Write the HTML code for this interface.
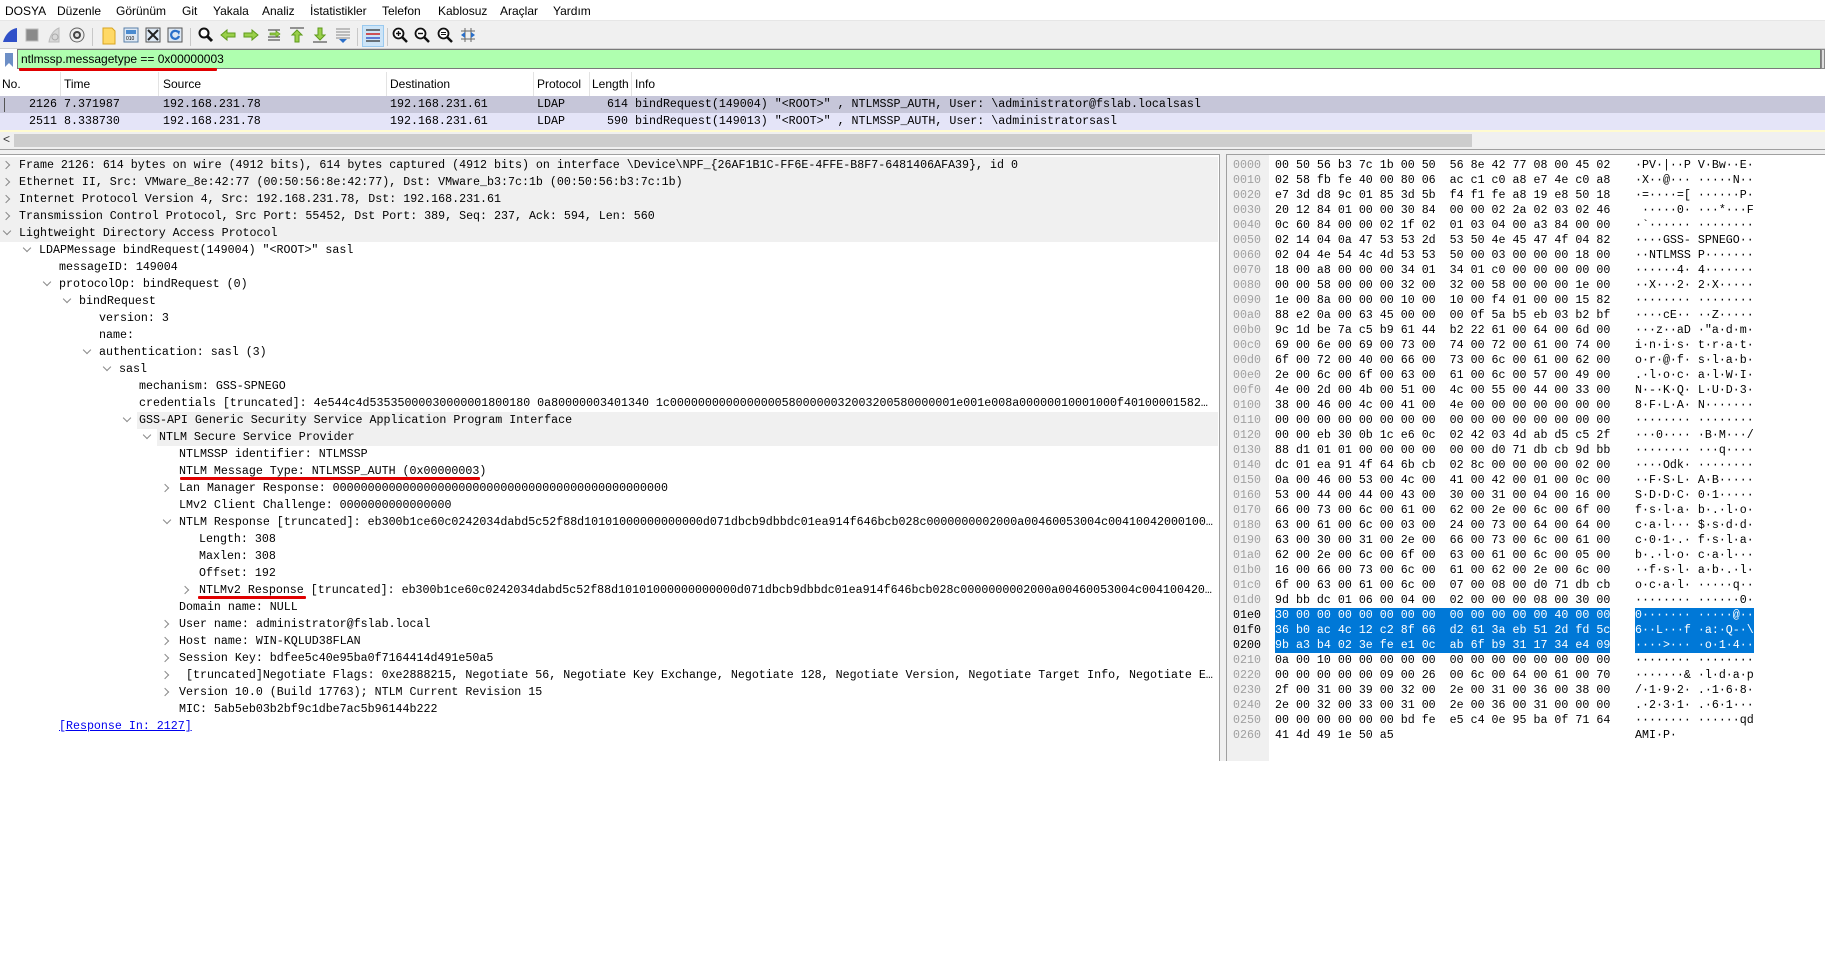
<!DOCTYPE html>
<html><head><meta charset="utf-8">
<style>
*{margin:0;padding:0;box-sizing:border-box}
body{width:1825px;height:761px;overflow:hidden;background:#fff;position:relative;font-family:"Liberation Sans",sans-serif;color:#000}
.ab{position:absolute}
.menu span{position:absolute;top:4px;font-size:12px}
.tb{position:absolute;top:20px;left:0;width:1825px;height:28px;background:#f0f0f0;border-top:1px solid #e6e6e6}
.ic{position:absolute;top:6px}
.sep{position:absolute;top:7px;width:1px;height:18px;background:#c8c8c8}
.mono{font-family:"Liberation Mono",monospace;font-size:11.65px;white-space:pre}
.ph{position:absolute;top:72px;height:24px;font-size:12px;line-height:24px;color:#000}
.phs{position:absolute;top:72px;width:1px;height:24px;background:#e3e3e3}
.row{position:absolute;left:0;width:1825px;height:17px;line-height:17px}
.row span{position:absolute;top:0}
.dl{position:absolute;left:0;width:1218px;height:17px;line-height:17px}
.dl .t{position:absolute;top:0;overflow:hidden;text-overflow:ellipsis;white-space:pre}
.cc,.ce{position:absolute;top:5px;width:6px;height:6px;border-right:1.4px solid #8a8a8a;border-bottom:1.4px solid #8a8a8a}
.cc{transform:rotate(-45deg)}
.ce{transform:rotate(45deg);top:3px}
.g{background:#f0f0f0}
.hr{position:absolute;left:1226px;width:599px;height:15px;line-height:15px}
.hr .o{position:absolute;top:0;left:7px;color:#a0a0a0}
.hr .h{position:absolute;top:0;left:49px}
.hr .a{position:absolute;top:0;left:409px}
.sel .h,.sel .a{background:#0078d7;color:#fff}
.sel .o{color:#000}
.ul{position:absolute;height:3px;background:#e00000;border-radius:1px}
</style></head><body>

<div class="menu">
<span style="left:5px">DOSYA</span><span style="left:57px">Düzenle</span><span style="left:116px">Görünüm</span><span style="left:182px">Git</span><span style="left:213px">Yakala</span><span style="left:262px">Analiz</span><span style="left:310px">İstatistikler</span><span style="left:382px">Telefon</span><span style="left:438px">Kablosuz</span><span style="left:500px">Araçlar</span><span style="left:553px">Yardım</span>
</div>

<div class="tb">
<svg class="ic" style="left:2px" width="16" height="16"><path d="M15 15H1C3 8 8 2 15 1Z" fill="#3050c8"/></svg>
<svg class="ic" style="left:24px" width="16" height="16"><rect x="2" y="2" width="12" height="12" fill="#8a8a8a" stroke="#bbb"/></svg>
<svg class="ic" style="left:46px" width="16" height="16"><path d="M13 15H3C4 8 8 3 13 1Z" fill="#d8d8d8" stroke="#bbb"/><circle cx="9" cy="10" r="3" fill="none" stroke="#aaa"/></svg>
<svg class="ic" style="left:69px" width="16" height="16"><circle cx="8" cy="8" r="7" fill="#eee" stroke="#666"/><circle cx="8" cy="8" r="4" fill="#444"/><circle cx="8" cy="8" r="2" fill="#ddd"/></svg>
<div class="sep" style="left:92px"></div>
<svg class="ic" style="left:101px" width="16" height="18"><path d="M2 1h9l3 3v13H2z" fill="#ffd966" stroke="#d9a520"/></svg>
<svg class="ic" style="left:123px" width="16" height="16"><rect x="1" y="1" width="14" height="14" fill="#dde8f4" stroke="#5a7fa8"/><rect x="3" y="3" width="10" height="4" fill="#4a8bd0"/><text x="3" y="13" font-size="5" font-family="Liberation Sans">010</text></svg>
<svg class="ic" style="left:145px" width="16" height="16"><rect x="1" y="1" width="14" height="14" fill="#dde8f4" stroke="#555"/><path d="M3 3L13 13M13 3L3 13" stroke="#222" stroke-width="2"/></svg>
<svg class="ic" style="left:167px" width="16" height="16"><rect x="1" y="1" width="14" height="14" fill="#dde8f4" stroke="#555"/><path d="M11 5A4 4 0 1 0 12 9" fill="none" stroke="#2a6fc9" stroke-width="2.2"/><path d="M9 3l4 1-1 4z" fill="#2a6fc9"/></svg>
<div class="sep" style="left:190px"></div>
<svg class="ic" style="left:198px" width="16" height="16"><circle cx="6" cy="6" r="4.5" fill="#fff" stroke="#111" stroke-width="2"/><path d="M9 9l5 5" stroke="#111" stroke-width="3"/></svg>
<svg class="ic" style="left:220px" width="16" height="16"><path d="M1 8l6-5v3h8v4H7v3z" fill="#9ad04a" stroke="#5e9a1c"/></svg>
<svg class="ic" style="left:243px" width="16" height="16"><path d="M15 8L9 3v3H1v4h8v3z" fill="#9ad04a" stroke="#5e9a1c"/></svg>
<svg class="ic" style="left:266px" width="16" height="16"><path d="M2 3h12M2 13h12M2 10h12" stroke="#333"/><path d="M4 6h6V4l4 3-4 3V8H4z" fill="#9ad04a" stroke="#5e9a1c" stroke-width=".7"/></svg>
<svg class="ic" style="left:289px" width="16" height="16"><path d="M1 1h14" stroke="#333"/><path d="M8 3l5 5h-3v7H6V8H3z" fill="#9ad04a" stroke="#5e9a1c"/></svg>
<svg class="ic" style="left:312px" width="16" height="16"><path d="M1 15h14" stroke="#333"/><path d="M8 13l5-5h-3V1H6v7H3z" fill="#9ad04a" stroke="#5e9a1c"/></svg>
<svg class="ic" style="left:335px" width="16" height="16"><path d="M1 2h14M1 5h14M1 8h14M1 11h14" stroke="#888"/><path d="M4 12h8l-4 4z" fill="#2a6fc9"/></svg>
<div class="sep" style="left:357px"></div>
<div class="ab" style="left:362px;top:4px;width:22px;height:22px;background:#cce4f7;border:1px solid #99c9ef"></div>
<svg class="ic" style="left:365px" width="16" height="16"><path d="M1 3h14" stroke="#333" stroke-width="1.3"/><path d="M1 7h14" stroke="#c00" stroke-width="1.3"/><path d="M1 11h14" stroke="#2040c0" stroke-width="1.3"/><path d="M1 14h14" stroke="#333" stroke-width="1.3"/></svg>
<div class="sep" style="left:387px"></div>
<svg class="ic" style="left:392px" width="16" height="16"><circle cx="6.5" cy="6.5" r="5" fill="#fff" stroke="#111" stroke-width="1.8"/><path d="M10 10l5 5" stroke="#111" stroke-width="2.5"/><path d="M4 6.5h5M6.5 4v5" stroke="#111" stroke-width="1.4"/></svg>
<svg class="ic" style="left:414px" width="16" height="16"><circle cx="6.5" cy="6.5" r="5" fill="#fff" stroke="#111" stroke-width="1.8"/><path d="M10 10l5 5" stroke="#111" stroke-width="2.5"/><path d="M4 6.5h5" stroke="#111" stroke-width="1.4"/></svg>
<svg class="ic" style="left:437px" width="16" height="16"><circle cx="6.5" cy="6.5" r="5" fill="#fff" stroke="#111" stroke-width="1.8"/><path d="M10 10l5 5" stroke="#111" stroke-width="2.5"/><path d="M4 5.5h5M4 7.5h5" stroke="#111" stroke-width="1"/></svg>
<svg class="ic" style="left:460px" width="16" height="16"><path d="M5 1v14M11 1v14M1 4h14M1 12h14" stroke="#666"/><path d="M1 8l4-3v6zM15 8l-4-3v6z" fill="#2a6fc9"/></svg>
</div>

<!-- filter bar -->
<div class="ab" style="left:0;top:48px;width:1825px;height:1px;background:#d0d0d0"></div>
<div class="ab" style="left:0;top:49px;width:1825px;height:21px;background:#fff"></div>
<svg class="ab" style="left:4px;top:52px" width="10" height="16"><path d="M1 1h8v14L5 11 1 15z" fill="#6d8fc6"/></svg>
<div class="ab" style="left:17px;top:49px;width:1804px;height:20px;background:#afffaf;border:1px solid #7a7a7a"></div>
<div class="ab" style="left:21px;top:51px;font-size:12px;line-height:16px">ntlmssp.messagetype == 0x00000003</div>
<div class="ul" style="left:19px;top:68px;width:198px"></div>
<div class="ab" style="left:1821px;top:49px;width:4px;height:20px;background:#ddd;border:1px solid #888"></div>

<!-- packet list -->
<div class="ph" style="left:2px">No.</div>
<div class="ph" style="left:64px">Time</div>
<div class="ph" style="left:163px">Source</div>
<div class="ph" style="left:390px">Destination</div>
<div class="ph" style="left:537px">Protocol</div>
<div class="ph" style="left:592px;width:38px;overflow:hidden">Length</div>
<div class="ph" style="left:635px">Info</div>
<div class="phs" style="left:60px"></div><div class="phs" style="left:158px"></div><div class="phs" style="left:386px"></div><div class="phs" style="left:533px"></div><div class="phs" style="left:589px"></div><div class="phs" style="left:631px"></div>

<div class="row mono" style="top:96px;background:#c6c6d9"><span style="left:4px;top:2px;width:1px;height:14px;background:#555"></span><span style="left:29px">2126</span><span style="left:64px">7.371987</span><span style="left:163px">192.168.231.78</span><span style="left:390px">192.168.231.61</span><span style="left:537px">LDAP</span><span style="left:607px">614</span><span style="left:635px">bindRequest(149004) "&lt;ROOT&gt;" , NTLMSSP_AUTH, User: \administrator@fslab.localsasl</span></div>
<div class="row mono" style="top:113px;background:#e4e4f8"><span style="left:29px">2511</span><span style="left:64px">8.338730</span><span style="left:163px">192.168.231.78</span><span style="left:390px">192.168.231.61</span><span style="left:537px">LDAP</span><span style="left:607px">590</span><span style="left:635px">bindRequest(149013) "&lt;ROOT&gt;" , NTLMSSP_AUTH, User: \administratorsasl</span></div>
<div class="ab" style="left:0;top:130px;width:1825px;height:2px;background:#fffbd0"></div>
<div class="ab" style="left:0;top:132px;width:1825px;height:17px;background:#f0f0f0"></div>
<div class="ab" style="left:14px;top:134px;width:1458px;height:13px;background:#cdcdcd"></div>
<div class="ab" style="left:3px;top:132px;font-size:12px;color:#333">&lt;</div>
<div class="ab" style="left:0;top:149px;width:1825px;height:1px;background:#a0a0a0"></div>
<div class="ab" style="left:0;top:150px;width:1825px;height:4px;background:#f0f0f0"></div>
<div class="ab" style="left:0;top:154px;width:1220px;height:607px;border:1px solid #a0a0a0;border-left:none;border-bottom:none"></div>
<div class="ab" style="left:1226px;top:154px;width:599px;height:607px;border:1px solid #a0a0a0;border-right:none;border-bottom:none"></div>
<div class="ab" style="left:1220px;top:154px;width:6px;height:607px;background:#f0f0f0"></div>
<div class="ab" style="left:1227px;top:155px;width:42px;height:606px;background:#f0f0f0"></div>

<!-- details -->
<div class="mono">
<div class="dl g" style="top:157px"><i class="cc" style="left:3px"></i><span class="t" style="left:19px;width:1195px">Frame 2126: 614 bytes on wire (4912 bits), 614 bytes captured (4912 bits) on interface \Device\NPF_{26AF1B1C-FF6E-4FFE-B8F7-6481406AFA39}, id 0</span></div>
<div class="dl g" style="top:174px"><i class="cc" style="left:3px"></i><span class="t" style="left:19px;width:1195px">Ethernet II, Src: VMware_8e:42:77 (00:50:56:8e:42:77), Dst: VMware_b3:7c:1b (00:50:56:b3:7c:1b)</span></div>
<div class="dl g" style="top:191px"><i class="cc" style="left:3px"></i><span class="t" style="left:19px;width:1195px">Internet Protocol Version 4, Src: 192.168.231.78, Dst: 192.168.231.61</span></div>
<div class="dl g" style="top:208px"><i class="cc" style="left:3px"></i><span class="t" style="left:19px;width:1195px">Transmission Control Protocol, Src Port: 55452, Dst Port: 389, Seq: 237, Ack: 594, Len: 560</span></div>
<div class="dl g" style="top:225px"><i class="ce" style="left:4px"></i><span class="t" style="left:19px;width:1195px">Lightweight Directory Access Protocol</span></div>
<div class="dl" style="top:242px"><i class="ce" style="left:24px"></i><span class="t" style="left:39px">LDAPMessage bindRequest(149004) "&lt;ROOT&gt;" sasl</span></div>
<div class="dl" style="top:259px"><span class="t" style="left:59px">messageID: 149004</span></div>
<div class="dl" style="top:276px"><i class="ce" style="left:44px"></i><span class="t" style="left:59px">protocolOp: bindRequest (0)</span></div>
<div class="dl" style="top:293px"><i class="ce" style="left:64px"></i><span class="t" style="left:79px">bindRequest</span></div>
<div class="dl" style="top:310px"><span class="t" style="left:99px">version: 3</span></div>
<div class="dl" style="top:327px"><span class="t" style="left:99px">name:</span></div>
<div class="dl" style="top:344px"><i class="ce" style="left:84px"></i><span class="t" style="left:99px">authentication: sasl (3)</span></div>
<div class="dl" style="top:361px"><i class="ce" style="left:104px"></i><span class="t" style="left:119px">sasl</span></div>
<div class="dl" style="top:378px"><span class="t" style="left:139px">mechanism: GSS-SPNEGO</span></div>
<div class="dl" style="top:395px"><span class="t" style="left:139px;width:1075px">credentials [truncated]: 4e544c4d53535000030000001800180 0a80000003401340 1c00000000000000005800000032003200580000001e001e008a00000010001000f4010000158288e2</span></div>
<div class="dl" style="top:412px"><i class="ce" style="left:124px"></i><span class="t g" style="left:137px;width:1081px;padding-left:2px">GSS-API Generic Security Service Application Program Interface</span></div>
<div class="dl" style="top:429px"><i class="ce" style="left:144px"></i><span class="t g" style="left:157px;width:1061px;padding-left:2px">NTLM Secure Service Provider</span></div>
<div class="dl" style="top:446px"><span class="t" style="left:179px">NTLMSSP identifier: NTLMSSP</span></div>
<div class="dl" style="top:463px"><span class="t" style="left:179px">NTLM Message Type: NTLMSSP_AUTH (0x00000003)</span></div>
<div class="dl" style="top:480px"><i class="cc" style="left:162px"></i><span class="t" style="left:179px">Lan Manager Response: 000000000000000000000000000000000000000000000000</span></div>
<div class="dl" style="top:497px"><span class="t" style="left:179px">LMv2 Client Challenge: 0000000000000000</span></div>
<div class="dl" style="top:514px"><i class="ce" style="left:164px"></i><span class="t" style="left:179px;width:1035px">NTLM Response [truncated]: eb300b1ce60c0242034dabd5c52f88d10101000000000000d071dbcb9dbbdc01ea914f646bcb028c0000000002000a00460053004c0041004200010000</span></div>
<div class="dl" style="top:531px"><span class="t" style="left:199px">Length: 308</span></div>
<div class="dl" style="top:548px"><span class="t" style="left:199px">Maxlen: 308</span></div>
<div class="dl" style="top:565px"><span class="t" style="left:199px">Offset: 192</span></div>
<div class="dl" style="top:582px"><i class="cc" style="left:182px"></i><span class="t" style="left:199px;width:1015px">NTLMv2 Response [truncated]: eb300b1ce60c0242034dabd5c52f88d10101000000000000d071dbcb9dbbdc01ea914f646bcb028c0000000002000a00460053004c0041004200010000</span></div>
<div class="dl" style="top:599px"><span class="t" style="left:179px">Domain name: NULL</span></div>
<div class="dl" style="top:616px"><i class="cc" style="left:162px"></i><span class="t" style="left:179px">User name: administrator@fslab.local</span></div>
<div class="dl" style="top:633px"><i class="cc" style="left:162px"></i><span class="t" style="left:179px">Host name: WIN-KQLUD38FLAN</span></div>
<div class="dl" style="top:650px"><i class="cc" style="left:162px"></i><span class="t" style="left:179px">Session Key: bdfee5c40e95ba0f7164414d491e50a5</span></div>
<div class="dl" style="top:667px"><i class="cc" style="left:162px"></i><span class="t" style="left:179px;width:1035px"> [truncated]Negotiate Flags: 0xe2888215, Negotiate 56, Negotiate Key Exchange, Negotiate 128, Negotiate Version, Negotiate Target Info, Negotiate Extended Security</span></div>
<div class="dl" style="top:684px"><i class="cc" style="left:162px"></i><span class="t" style="left:179px">Version 10.0 (Build 17763); NTLM Current Revision 15</span></div>
<div class="dl" style="top:701px"><span class="t" style="left:179px">MIC: 5ab5eb03b2bf9c1dbe7ac5b96144b222</span></div>
<div class="dl" style="top:718px"><span class="t" style="left:59px;color:#0000ee;text-decoration:underline">[Response In: 2127]</span></div>
</div>
<div class="ul" style="left:180px;top:477px;width:300px"></div>
<div class="ul" style="left:198px;top:596px;width:108px"></div>

<!-- hex -->
<div class="mono">
<div class="hr" style="top:158px"><span class="o">0000</span><span class="h">00 50 56 b3 7c 1b 00 50  56 8e 42 77 08 00 45 02</span><span class="a">·PV·|··P V·Bw··E·</span></div>
<div class="hr" style="top:173px"><span class="o">0010</span><span class="h">02 58 fb fe 40 00 80 06  ac c1 c0 a8 e7 4e c0 a8</span><span class="a">·X··@··· ·····N··</span></div>
<div class="hr" style="top:188px"><span class="o">0020</span><span class="h">e7 3d d8 9c 01 85 3d 5b  f4 f1 fe a8 19 e8 50 18</span><span class="a">·=····=[ ······P·</span></div>
<div class="hr" style="top:203px"><span class="o">0030</span><span class="h">20 12 84 01 00 00 30 84  00 00 02 2a 02 03 02 46</span><span class="a"> ·····0· ···*···F</span></div>
<div class="hr" style="top:218px"><span class="o">0040</span><span class="h">0c 60 84 00 00 02 1f 02  01 03 04 00 a3 84 00 00</span><span class="a">·`······ ········</span></div>
<div class="hr" style="top:233px"><span class="o">0050</span><span class="h">02 14 04 0a 47 53 53 2d  53 50 4e 45 47 4f 04 82</span><span class="a">····GSS- SPNEGO··</span></div>
<div class="hr" style="top:248px"><span class="o">0060</span><span class="h">02 04 4e 54 4c 4d 53 53  50 00 03 00 00 00 18 00</span><span class="a">··NTLMSS P·······</span></div>
<div class="hr" style="top:263px"><span class="o">0070</span><span class="h">18 00 a8 00 00 00 34 01  34 01 c0 00 00 00 00 00</span><span class="a">······4· 4·······</span></div>
<div class="hr" style="top:278px"><span class="o">0080</span><span class="h">00 00 58 00 00 00 32 00  32 00 58 00 00 00 1e 00</span><span class="a">··X···2· 2·X·····</span></div>
<div class="hr" style="top:293px"><span class="o">0090</span><span class="h">1e 00 8a 00 00 00 10 00  10 00 f4 01 00 00 15 82</span><span class="a">········ ········</span></div>
<div class="hr" style="top:308px"><span class="o">00a0</span><span class="h">88 e2 0a 00 63 45 00 00  00 0f 5a b5 eb 03 b2 bf</span><span class="a">····cE·· ··Z·····</span></div>
<div class="hr" style="top:323px"><span class="o">00b0</span><span class="h">9c 1d be 7a c5 b9 61 44  b2 22 61 00 64 00 6d 00</span><span class="a">···z··aD ·"a·d·m·</span></div>
<div class="hr" style="top:338px"><span class="o">00c0</span><span class="h">69 00 6e 00 69 00 73 00  74 00 72 00 61 00 74 00</span><span class="a">i·n·i·s· t·r·a·t·</span></div>
<div class="hr" style="top:353px"><span class="o">00d0</span><span class="h">6f 00 72 00 40 00 66 00  73 00 6c 00 61 00 62 00</span><span class="a">o·r·@·f· s·l·a·b·</span></div>
<div class="hr" style="top:368px"><span class="o">00e0</span><span class="h">2e 00 6c 00 6f 00 63 00  61 00 6c 00 57 00 49 00</span><span class="a">.·l·o·c· a·l·W·I·</span></div>
<div class="hr" style="top:383px"><span class="o">00f0</span><span class="h">4e 00 2d 00 4b 00 51 00  4c 00 55 00 44 00 33 00</span><span class="a">N·-·K·Q· L·U·D·3·</span></div>
<div class="hr" style="top:398px"><span class="o">0100</span><span class="h">38 00 46 00 4c 00 41 00  4e 00 00 00 00 00 00 00</span><span class="a">8·F·L·A· N·······</span></div>
<div class="hr" style="top:413px"><span class="o">0110</span><span class="h">00 00 00 00 00 00 00 00  00 00 00 00 00 00 00 00</span><span class="a">········ ········</span></div>
<div class="hr" style="top:428px"><span class="o">0120</span><span class="h">00 00 eb 30 0b 1c e6 0c  02 42 03 4d ab d5 c5 2f</span><span class="a">···0···· ·B·M···/</span></div>
<div class="hr" style="top:443px"><span class="o">0130</span><span class="h">88 d1 01 01 00 00 00 00  00 00 d0 71 db cb 9d bb</span><span class="a">········ ···q····</span></div>
<div class="hr" style="top:458px"><span class="o">0140</span><span class="h">dc 01 ea 91 4f 64 6b cb  02 8c 00 00 00 00 02 00</span><span class="a">····Odk· ········</span></div>
<div class="hr" style="top:473px"><span class="o">0150</span><span class="h">0a 00 46 00 53 00 4c 00  41 00 42 00 01 00 0c 00</span><span class="a">··F·S·L· A·B·····</span></div>
<div class="hr" style="top:488px"><span class="o">0160</span><span class="h">53 00 44 00 44 00 43 00  30 00 31 00 04 00 16 00</span><span class="a">S·D·D·C· 0·1·····</span></div>
<div class="hr" style="top:503px"><span class="o">0170</span><span class="h">66 00 73 00 6c 00 61 00  62 00 2e 00 6c 00 6f 00</span><span class="a">f·s·l·a· b·.·l·o·</span></div>
<div class="hr" style="top:518px"><span class="o">0180</span><span class="h">63 00 61 00 6c 00 03 00  24 00 73 00 64 00 64 00</span><span class="a">c·a·l··· $·s·d·d·</span></div>
<div class="hr" style="top:533px"><span class="o">0190</span><span class="h">63 00 30 00 31 00 2e 00  66 00 73 00 6c 00 61 00</span><span class="a">c·0·1·.· f·s·l·a·</span></div>
<div class="hr" style="top:548px"><span class="o">01a0</span><span class="h">62 00 2e 00 6c 00 6f 00  63 00 61 00 6c 00 05 00</span><span class="a">b·.·l·o· c·a·l···</span></div>
<div class="hr" style="top:563px"><span class="o">01b0</span><span class="h">16 00 66 00 73 00 6c 00  61 00 62 00 2e 00 6c 00</span><span class="a">··f·s·l· a·b·.·l·</span></div>
<div class="hr" style="top:578px"><span class="o">01c0</span><span class="h">6f 00 63 00 61 00 6c 00  07 00 08 00 d0 71 db cb</span><span class="a">o·c·a·l· ·····q··</span></div>
<div class="hr" style="top:593px"><span class="o">01d0</span><span class="h">9d bb dc 01 06 00 04 00  02 00 00 00 08 00 30 00</span><span class="a">········ ······0·</span></div>
<div class="hr sel" style="top:608px"><span class="o">01e0</span><span class="h">30 00 00 00 00 00 00 00  00 00 00 00 00 40 00 00</span><span class="a">0······· ·····@··</span></div>
<div class="hr sel" style="top:623px"><span class="o">01f0</span><span class="h">36 b0 ac 4c 12 c2 8f 66  d2 61 3a eb 51 2d fd 5c</span><span class="a">6··L···f ·a:·Q-·\</span></div>
<div class="hr sel" style="top:638px"><span class="o">0200</span><span class="h">9b a3 b4 02 3e fe e1 0c  ab 6f b9 31 17 34 e4 09</span><span class="a">····&gt;··· ·o·1·4··</span></div>
<div class="hr" style="top:653px"><span class="o">0210</span><span class="h">0a 00 10 00 00 00 00 00  00 00 00 00 00 00 00 00</span><span class="a">········ ········</span></div>
<div class="hr" style="top:668px"><span class="o">0220</span><span class="h">00 00 00 00 00 09 00 26  00 6c 00 64 00 61 00 70</span><span class="a">·······&amp; ·l·d·a·p</span></div>
<div class="hr" style="top:683px"><span class="o">0230</span><span class="h">2f 00 31 00 39 00 32 00  2e 00 31 00 36 00 38 00</span><span class="a">/·1·9·2· .·1·6·8·</span></div>
<div class="hr" style="top:698px"><span class="o">0240</span><span class="h">2e 00 32 00 33 00 31 00  2e 00 36 00 31 00 00 00</span><span class="a">.·2·3·1· .·6·1···</span></div>
<div class="hr" style="top:713px"><span class="o">0250</span><span class="h">00 00 00 00 00 00 bd fe  e5 c4 0e 95 ba 0f 71 64</span><span class="a">········ ······qd</span></div>
<div class="hr" style="top:728px"><span class="o">0260</span><span class="h">41 4d 49 1e 50 a5</span><span class="a">AMI·P·</span></div>
</div>
</body></html>
